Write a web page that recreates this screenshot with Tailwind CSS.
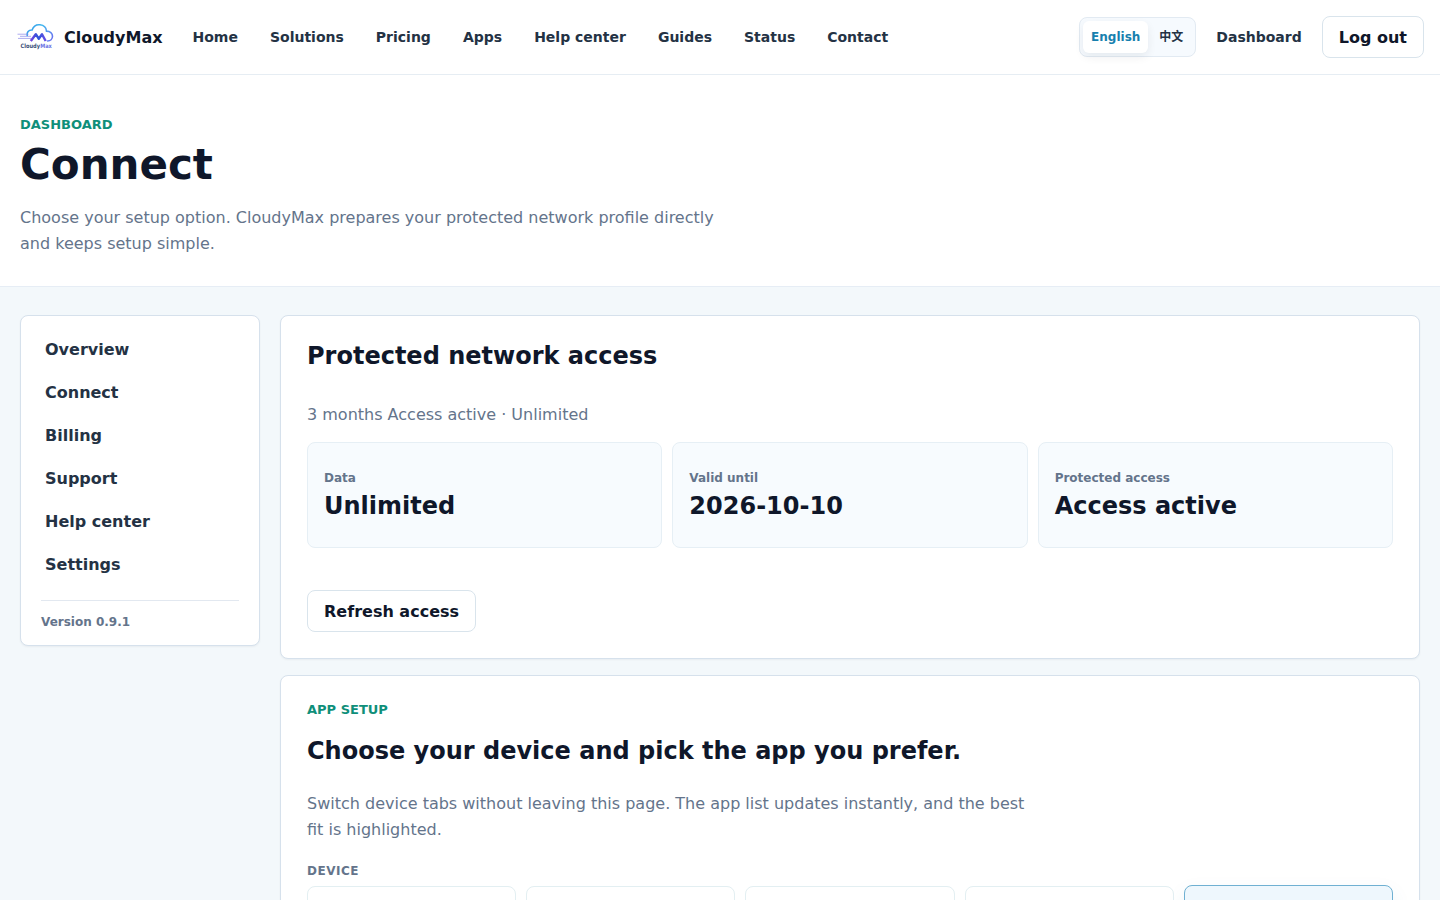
<!DOCTYPE html>
<html lang="en">
<head>
  <meta charset="UTF-8">
  <meta name="viewport" content="width=device-width, initial-scale=1.0">
  <title>Connect - CloudyMax</title>
  <script src="https://cdn.jsdelivr.net/npm/@tailwindcss/browser@4"></script>
</head>
<body class="h-screen overflow-hidden bg-[#f3f8fb] font-['DejaVu_Sans','Noto_Sans_CJK_SC',sans-serif] text-base text-[#0f172a]">

  <!-- Header -->
  <header class="flex h-[75px] items-center border-b border-[#e6edf3] bg-white px-4">
    <a href="#" class="flex items-center gap-2 font-bold">
      <svg class="h-10 w-10" viewBox="0 0 40 40" fill="none">
        <defs>
          <linearGradient id="cloud" x1="10" y1="8" x2="37" y2="24" gradientUnits="userSpaceOnUse">
            <stop stop-color="#2f8fe8"/>
            <stop offset=".45" stop-color="#42b9ee"/>
            <stop offset="1" stop-color="#6d6cf0"/>
          </linearGradient>
          <linearGradient id="peak" x1="14" y1="22" x2="30" y2="22" gradientUnits="userSpaceOnUse">
            <stop stop-color="#7a3fe0"/>
            <stop offset=".5" stop-color="#2b55d8"/>
            <stop offset="1" stop-color="#6a4be6"/>
          </linearGradient>
        </defs>
        <path d="M11.200 18.500c-.8-3.300 1.600-5.700 4.900-5.500 1.300-3.700 4.400-5.600 7.900-5.200 3.500.4 6.200 2.900 6.500 6.300 3.600.1 6 2.400 6 5.200 0 2.900-2.200 4.700-4.900 4.700" stroke="url(#cloud)" stroke-width="1.600" stroke-linecap="round"/>
        <path d="M1.500 17.200h11M4 19.300h11M2 21.400h13" stroke="#8a86ea" stroke-width=".7"/>
        <path d="M14.800 24l5-6.800 3 4.600 3.200-4.600 3.700 6.800" stroke="url(#peak)" stroke-width="2.400" stroke-linejoin="round"/>
        <text x="4.500" y="31" font-size="6" font-weight="700" textLength="19.500" lengthAdjust="spacingAndGlyphs" fill="#3a5078">Cloudy</text>
        <text x="24.200" y="31" font-size="6" font-weight="700" textLength="11.600" lengthAdjust="spacingAndGlyphs" fill="#6a70e4">Max</text>
      </svg>
      <span class="pt-0.5">CloudyMax</span>
    </a>
    <nav class="ml-[30px] flex gap-8 text-sm font-bold text-[#243244]">
      <a href="#">Home</a>
      <a href="#">Solutions</a>
      <a href="#">Pricing</a>
      <a href="#">Apps</a>
      <a href="#">Help center</a>
      <a href="#">Guides</a>
      <a href="#">Status</a>
      <a href="#">Contact</a>
    </nav>
    <div class="ml-auto flex items-center gap-5">
      <div class="flex h-10 items-center rounded-lg border border-[#e2eaf2] bg-[#f6fafe] p-[3px] text-xs font-bold text-[#243244]">
        <button class="h-8 rounded-md bg-white px-2 text-[#177fae] shadow-[0_4px_10px_rgba(15,23,42,0.07)]">English</button>
        <button class="ml-[3px] h-8 pr-[9px] pl-2">中文</button>
      </div>
      <a href="#" class="text-sm font-bold text-[#243244]">Dashboard</a>
      <button class="h-[42px] rounded-lg border border-[#d9e4ec] bg-white px-4 pt-0.5 font-bold">Log out</button>
    </div>
  </header>

  <!-- Page title -->
  <section class="h-[212px] border-b border-[#e6edf5] bg-white px-5 pt-10">
    <p class="text-[13px] leading-5 font-bold text-[#0f8f7a]">DASHBOARD</p>
    <h1 class="mt-[5px] text-[42px] leading-[50px] font-bold">Connect</h1>
    <p class="mt-[15px] w-[720px] leading-[26px] text-[#64748b]">Choose your setup option. CloudyMax prepares your protected network profile directly and keeps setup simple.</p>
  </section>

  <main class="grid h-[613px] grid-cols-[240px_1fr] items-start gap-5 overflow-hidden px-5 pt-7">
    <!-- Sidebar -->
    <aside class="h-[331px] rounded-lg border border-[#d6e1ec] bg-white px-5 pt-3 shadow-[0_1px_2px_rgba(15,23,42,0.05)]">
      <nav class="flex flex-col px-1 font-bold text-[#243244]">
        <a href="#" class="h-[43px] leading-[43px]">Overview</a>
        <a href="#" class="h-[43px] leading-[43px]">Connect</a>
        <a href="#" class="h-[43px] leading-[43px]">Billing</a>
        <a href="#" class="h-[43px] leading-[43px]">Support</a>
        <a href="#" class="h-[43px] leading-[43px]">Help center</a>
        <a href="#" class="h-[43px] leading-[43px]">Settings</a>
      </nav>
      <p class="mt-[14px] border-t border-[#e2e8f0] pt-[11px] text-xs leading-5 font-bold text-[#64748b]">Version 0.9.1</p>
    </aside>

    <div class="flex flex-col gap-4">
      <!-- Access -->
      <section class="h-[344px] rounded-lg border border-[#d6e1ec] bg-white px-[26px] pt-6 shadow-[0_1px_2px_rgba(15,23,42,0.05)]">
        <h2 class="text-2xl font-bold">Protected network access</h2>
        <p class="mt-[30px] leading-[26px] text-[#64748b]">3 months Access active · Unlimited</p>
        <div class="mt-[14px] grid grid-cols-3 gap-[10px]">
          <div class="h-[106px] rounded-lg border border-[#e6eff5] bg-[#f7fbfe] px-4 pt-[25px]">
            <p class="text-xs leading-5 font-bold text-[#64748b]">Data</p>
            <p class="mt-0.5 text-2xl font-bold">Unlimited</p>
          </div>
          <div class="h-[106px] rounded-lg border border-[#e6eff5] bg-[#f7fbfe] px-4 pt-[25px]">
            <p class="text-xs leading-5 font-bold text-[#64748b]">Valid until</p>
            <p class="mt-0.5 text-2xl font-bold">2026-10-10</p>
          </div>
          <div class="h-[106px] rounded-lg border border-[#e6eff5] bg-[#f7fbfe] px-4 pt-[25px]">
            <p class="text-xs leading-5 font-bold text-[#64748b]">Protected access</p>
            <p class="mt-0.5 text-2xl font-bold">Access active</p>
          </div>
        </div>
        <button class="mt-[42px] h-[42px] rounded-lg border border-[#d9e4ec] bg-white px-4 pt-0.5 font-bold">Refresh access</button>
      </section>

      <!-- App setup -->
      <section class="rounded-lg border border-[#d6e1ec] bg-white px-[26px] pt-6 pb-[26px] shadow-[0_1px_2px_rgba(15,23,42,0.05)]">
        <p class="text-[13px] leading-5 font-bold text-[#0f8f7a]">APP SETUP</p>
        <h2 class="mt-[15px] text-2xl font-bold">Choose your device and pick the app you prefer.</h2>
        <p class="mt-6 w-[720px] leading-[26px] text-[#64748b]">Switch device tabs without leaving this page. The app list updates instantly, and the best fit is highlighted.</p>
        <p class="mt-[18px] text-xs leading-5 font-bold tracking-[0.5px] text-[#64748b]">DEVICE</p>
        <div class="mt-[5px] grid grid-cols-5 gap-[10px]">
          <div class="h-16 rounded-lg border border-[#e3eff2] bg-white"></div>
          <div class="h-16 rounded-lg border border-[#e3eff2] bg-white"></div>
          <div class="h-16 rounded-lg border border-[#e3eff2] bg-white"></div>
          <div class="h-16 rounded-lg border border-[#e3eff2] bg-white"></div>
          <div class="-mt-px h-16 rounded-lg border border-[#6fb0d2] bg-[#eef7fd] shadow-[0_8px_20px_rgba(14,116,170,0.08)]"></div>
        </div>
      </section>
    </div>
  </main>

</body>
</html>
